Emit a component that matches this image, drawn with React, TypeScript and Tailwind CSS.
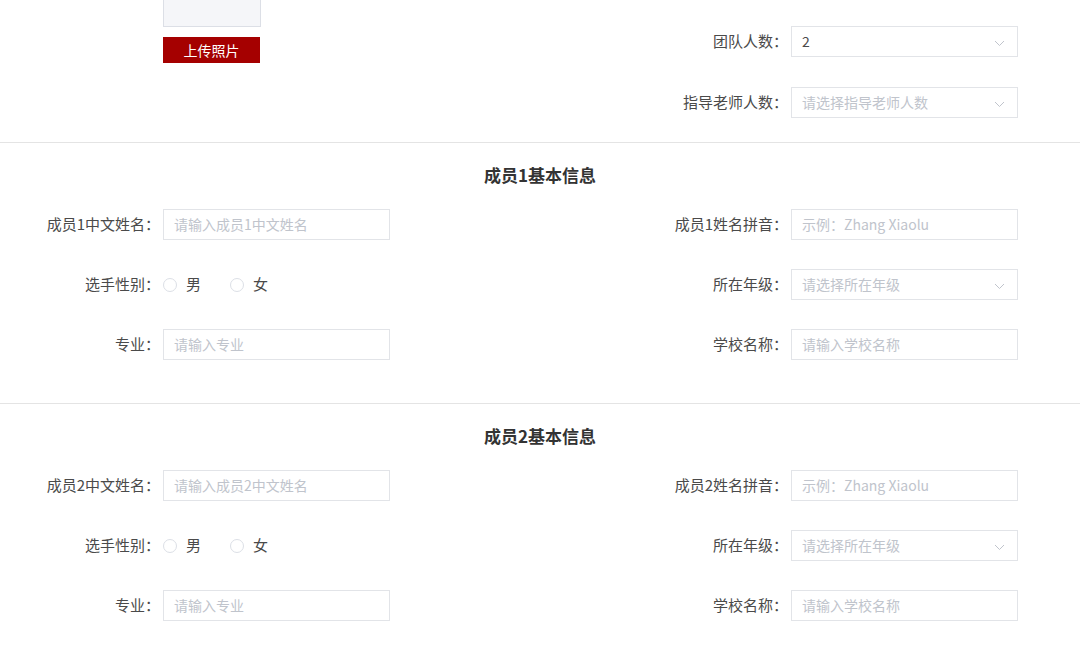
import React from "react";

const font = "font-['Noto_Sans_CJK_SC','Noto_Sans',sans-serif]";

function Chevron() {
  return (
    <svg width="11" height="7" viewBox="0 0 11 7" fill="none" className="shrink-0" aria-hidden="true">
      <path d="M1 1l4.5 4.5L10 1" stroke="#c0c4cc" strokeWidth="1" />
    </svg>
  );
}

function Label({ text }: { text: string }) {
  return (
    <span className="w-[163px] pr-[3px] text-right text-[15px] leading-[20px] text-[#4a4a4a] whitespace-nowrap -mt-[1px]">
      {text}：
    </span>
  );
}

function TextBox({ placeholder }: { placeholder: string }) {
  return (
    <div className="w-[227px] h-[31px] border border-[#e2e4e8] bg-white flex items-center px-[10px]">
      <span className="text-[14px] leading-[20px] text-[#c0c4cc] -mt-[1px]">{placeholder}</span>
    </div>
  );
}

function SelectBox({ value, placeholder }: { value?: string; placeholder?: string }) {
  return (
    <div className="w-[227px] h-[31px] border border-[#e2e4e8] bg-white flex items-center justify-between pl-[10px] pr-[12px]">
      {value ? (
        <span className="text-[14px] leading-[20px] text-[#4a4a4a] -mt-[1px]">{value}</span>
      ) : (
        <span className="text-[14px] leading-[20px] text-[#c0c4cc] -mt-[1px]">{placeholder}</span>
      )}
      <span className="mt-[3px]">
        <Chevron />
      </span>
    </div>
  );
}

function Radio({ label }: { label: string }) {
  return (
    <span className="flex items-center gap-[9px] mr-[29px]">
      <span className="w-[14px] h-[14px] rounded-full border border-[#dcdfe6] bg-white" />
      <span className="text-[15px] leading-[20px] text-[#4a4a4a] -mt-[1px]">{label}</span>
    </span>
  );
}

function Row({ children }: { children: React.ReactNode }) {
  return <div className="flex items-center justify-between pr-[62px] h-[31px]">{children}</div>;
}

function Item({ label, children }: { label: string; children: React.ReactNode }) {
  return (
    <div className="flex items-center h-[31px]">
      <Label text={label} />
      {children}
    </div>
  );
}

function MemberSection({ n }: { n: number }) {
  return (
    <div className="border-t border-[#e4e4e4] pt-[20px] pb-[43px]">
      <h3 className="text-center text-[17px] leading-[24px] font-bold text-[#333]">成员{n}基本信息</h3>
      <div className="mt-[22px] flex flex-col gap-[29px]">
        <Row>
          <Item label={`成员${n}中文姓名`}>
            <TextBox placeholder={`请输入成员${n}中文姓名`} />
          </Item>
          <Item label={`成员${n}姓名拼音`}>
            <TextBox placeholder="示例：Zhang Xiaolu" />
          </Item>
        </Row>
        <Row>
          <Item label="选手性别">
            <div className="w-[227px] flex items-center">
              <Radio label="男" />
              <Radio label="女" />
            </div>
          </Item>
          <Item label="所在年级">
            <SelectBox placeholder="请选择所在年级" />
          </Item>
        </Row>
        <Row>
          <Item label="专业">
            <TextBox placeholder="请输入专业" />
          </Item>
          <Item label="学校名称">
            <TextBox placeholder="请输入学校名称" />
          </Item>
        </Row>
      </div>
    </div>
  );
}

export default function App() {
  return (
    <div className={`min-h-screen w-[1080px] bg-white overflow-hidden ${font}`}>
      {/* top: photo + team counts */}
      <div className="flex items-start justify-between pr-[62px] pb-[24px]">
        <div className="pl-[163px] flex flex-col">
          <div className="w-[98px] h-[27px] bg-[#f5f6f9] border border-t-0 border-[#dcdfe6]" />
          <button className="mt-[10px] w-[97px] h-[26px] bg-[#a50000] text-white text-[14px] leading-[20px]">
            上传照片
          </button>
        </div>
        <div className="pt-[26px] flex flex-col gap-[30px]">
          <Item label="团队人数">
            <SelectBox value="2" />
          </Item>
          <Item label="指导老师人数">
            <SelectBox placeholder="请选择指导老师人数" />
          </Item>
        </div>
      </div>
      <MemberSection n={1} />
      <MemberSection n={2} />
    </div>
  );
}
